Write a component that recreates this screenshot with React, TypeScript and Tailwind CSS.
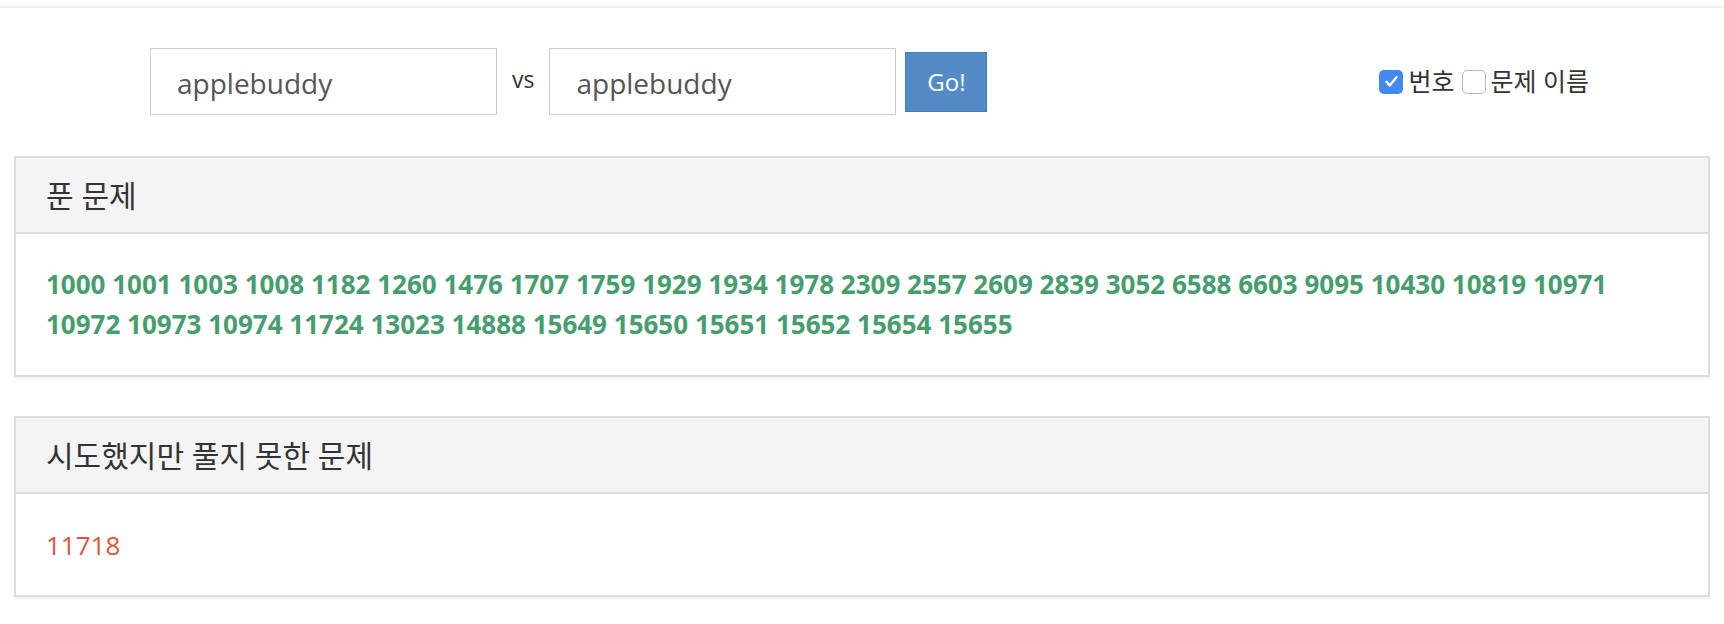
import React from 'react';

const solved = [
  1000, 1001, 1003, 1008, 1182, 1260, 1476, 1707, 1759, 1929, 1934, 1978, 2309, 2557, 2609, 2839,
  3052, 6588, 6603, 9095, 10430, 10819, 10971, 10972, 10973, 10974, 11724, 13023, 14888, 15649,
  15650, 15651, 15652, 15654, 15655,
];

const failed = [11718];

const Panel: React.FC<{ title: string; children: React.ReactNode }> = ({ title, children }) => (
  <div className="mx-[14px] border-2 border-[#ddd] bg-white shadow-[0_2px_3px_rgba(0,0,0,0.06)]">
    <div className="flex h-[76px] items-center border-b-2 border-[#ddd] bg-[#f4f4f4] px-[30px] text-[30px] text-[#333]">
      {title}
    </div>
    {children}
  </div>
);

const CheckBox: React.FC<{ checked: boolean }> = ({ checked }) =>
  checked ? (
    <span className="flex h-[24px] w-[24px] shrink-0 items-center justify-center rounded-[5px] bg-[#4289f4]">
      <svg className="h-[17px] w-[17px]" viewBox="0 0 24 24" fill="none" stroke="white" strokeWidth={3.4} strokeLinecap="round" strokeLinejoin="round">
        <path d="M5 12.5l4.5 5L19 6" />
      </svg>
    </span>
  ) : (
    <span className="block h-[24px] w-[24px] shrink-0 rounded-[5px] border border-[#b9b9b9] bg-white" />
  );

export default function App() {
  return (
    <div className="min-h-screen bg-white font-['Open_Sans','Noto_Sans_CJK_KR',sans-serif]">
      <div className="h-[6px]" />
      <div className="h-[2px] bg-[#eee]" />

      {/* Compare form */}
      <div className="flex items-center pl-[150px] pr-[135px] pt-[40px]">
        <div className="flex h-[67px] w-[347px] shrink-0 items-center border border-[#ccc] pl-[26px] pt-[3px] text-[28px] text-[#555]">
          applebuddy
        </div>
        <span className="mx-[15px] mb-[4px] text-[23px] text-[#333]">vs</span>
        <div className="flex h-[67px] w-[347px] shrink-0 items-center border border-[#ccc] pl-[26px] pt-[3px] text-[28px] text-[#555]">
          applebuddy
        </div>
        <button className="ml-[9px] h-[60px] w-[82px] shrink-0 border border-[#4a7db7] bg-[#528bc6] text-[24px] text-white">
          Go!
        </button>
        <div className="ml-auto flex items-center text-[25px] text-[#333]">
          <CheckBox checked />
          <span className="ml-[5px]">번호</span>
          <span className="ml-[7px] flex">
            <CheckBox checked={false} />
          </span>
          <span className="ml-[5px]">문제 이름</span>
        </div>
      </div>

      <div className="h-[41px]" />

      <Panel title="푼 문제">
        <div className="px-[30px] pb-[31px] pt-[30px] text-[26px] font-bold leading-[40px] text-[#469d6e]">
          {solved.map((id, i) => (
            <React.Fragment key={id}>
              <a className="cursor-pointer">{id}</a>
              {i < solved.length - 1 ? ' ' : ''}
            </React.Fragment>
          ))}
        </div>
      </Panel>

      <div className="h-[39px]" />

      <Panel title="시도했지만 풀지 못한 문제">
        <div className="px-[30px] pb-[30px] pt-[31px] text-[26px] leading-[40px] text-[#dd5540]">
          {failed.map((id) => (
            <a key={id} className="cursor-pointer">{id}</a>
          ))}
        </div>
      </Panel>
    </div>
  );
}
